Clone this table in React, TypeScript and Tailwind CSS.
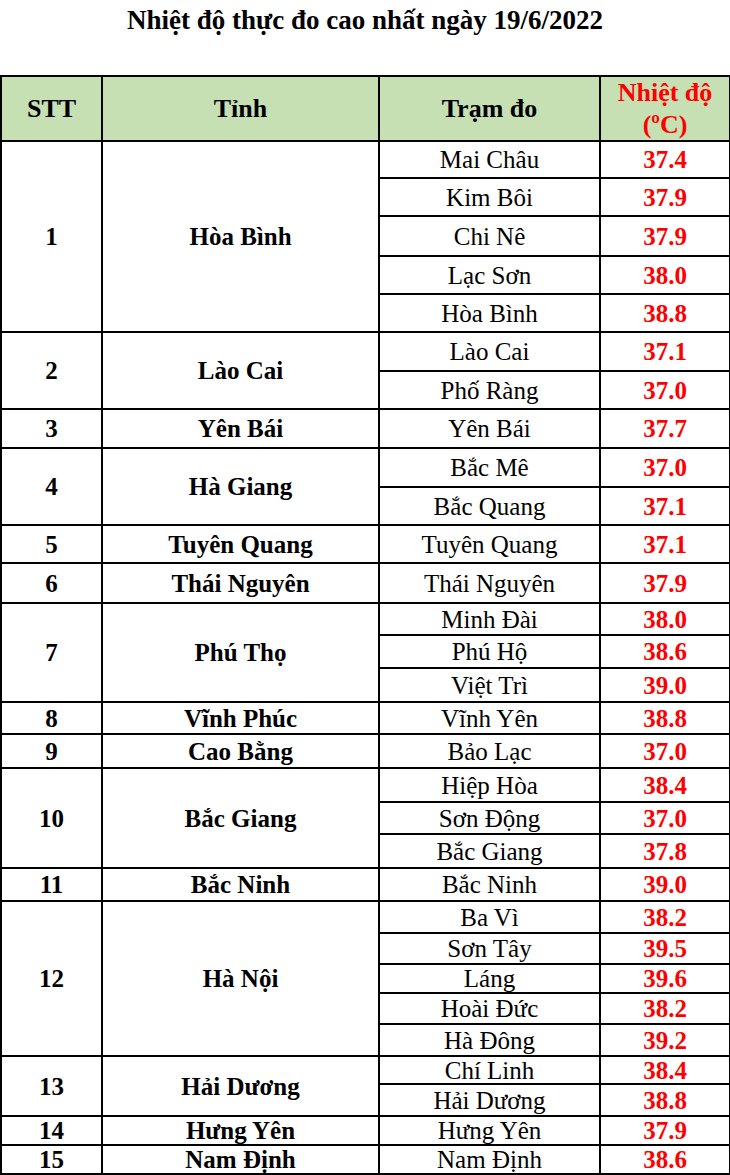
import React from 'react';

type Station = { name: string; temp: string; h: string };
type Province = { stt: number; tinh: string; rows: Station[] };

const DATA: Province[] = [
    {
        stt: 1,
        tinh: 'Hòa Bình',
        rows: [
            { name: 'Mai Châu', temp: '37.4', h: 'h-[37px]' },
            { name: 'Kim Bôi', temp: '37.9', h: 'h-[38px]' },
            { name: 'Chi Nê', temp: '37.9', h: 'h-[40px]' },
            { name: 'Lạc Sơn', temp: '38.0', h: 'h-[38px]' },
            { name: 'Hòa Bình', temp: '38.8', h: 'h-[38px]' },
        ],
    },
    {
        stt: 2,
        tinh: 'Lào Cai',
        rows: [
            { name: 'Lào Cai', temp: '37.1', h: 'h-[39px]' },
            { name: 'Phố Ràng', temp: '37.0', h: 'h-[38px]' },
        ],
    },
    { stt: 3, tinh: 'Yên Bái', rows: [{ name: 'Yên Bái', temp: '37.7', h: 'h-[39px]' }] },
    {
        stt: 4,
        tinh: 'Hà Giang',
        rows: [
            { name: 'Bắc Mê', temp: '37.0', h: 'h-[39px]' },
            { name: 'Bắc Quang', temp: '37.1', h: 'h-[38px]' },
        ],
    },
    { stt: 5, tinh: 'Tuyên Quang', rows: [{ name: 'Tuyên Quang', temp: '37.1', h: 'h-[38px]' }] },
    { stt: 6, tinh: 'Thái Nguyên', rows: [{ name: 'Thái Nguyên', temp: '37.9', h: 'h-[40px]' }] },
    {
        stt: 7,
        tinh: 'Phú Thọ',
        rows: [
            { name: 'Minh Đài', temp: '38.0', h: 'h-[32px]' },
            { name: 'Phú Hộ', temp: '38.6', h: 'h-[33px]' },
            { name: 'Việt Trì', temp: '39.0', h: 'h-[34px]' },
        ],
    },
    { stt: 8, tinh: 'Vĩnh Phúc', rows: [{ name: 'Vĩnh Yên', temp: '38.8', h: 'h-[32px]' }] },
    { stt: 9, tinh: 'Cao Bằng', rows: [{ name: 'Bảo Lạc', temp: '37.0', h: 'h-[34px]' }] },
    {
        stt: 10,
        tinh: 'Bắc Giang',
        rows: [
            { name: 'Hiệp Hòa', temp: '38.4', h: 'h-[34px]' },
            { name: 'Sơn Động', temp: '37.0', h: 'h-[32px]' },
            { name: 'Bắc Giang', temp: '37.8', h: 'h-[34px]' },
        ],
    },
    { stt: 11, tinh: 'Bắc Ninh', rows: [{ name: 'Bắc Ninh', temp: '39.0', h: 'h-[33px]' }] },
    {
        stt: 12,
        tinh: 'Hà Nội',
        rows: [
            { name: 'Ba Vì', temp: '38.2', h: 'h-[32px]' },
            { name: 'Sơn Tây', temp: '39.5', h: 'h-[31px]' },
            { name: 'Láng', temp: '39.6', h: 'h-[29px]' },
            { name: 'Hoài Đức', temp: '38.2', h: 'h-[31px]' },
            { name: 'Hà Đông', temp: '39.2', h: 'h-[32px]' },
        ],
    },
    {
        stt: 13,
        tinh: 'Hải Dương',
        rows: [
            { name: 'Chí Linh', temp: '38.4', h: 'h-[28px]' },
            { name: 'Hải Dương', temp: '38.8', h: 'h-[32px]' },
        ],
    },
    { stt: 14, tinh: 'Hưng Yên', rows: [{ name: 'Hưng Yên', temp: '37.9', h: 'h-[29px]' }] },
    { stt: 15, tinh: 'Nam Định', rows: [{ name: 'Nam Định', temp: '38.6', h: 'h-[29px]' }] },
];

const cell =
    'border-2 border-black p-0 text-center align-middle leading-none [font-family:Liberation_Serif,serif]';

export default function App() {
    return (
        <div className="w-[730px] bg-white text-black [font-family:Liberation_Serif,serif]">
            {/* Title */}
            <div className="h-[41px] flex items-center justify-center text-[27px] font-bold">
                Nhiệt độ thực đo cao nhất ngày 19/6/2022
            </div>

            <table className="mt-[34px] w-[729px] table-fixed border-collapse">
                <colgroup>
                    <col className="w-[101px]" />
                    <col className="w-[277px]" />
                    <col className="w-[221px]" />
                    <col className="w-[130px]" />
                </colgroup>
                <thead>
                    <tr className="h-[65px] bg-[#c6e0b4] text-[26px] font-bold">
                        <th className={cell}>STT</th>
                        <th className={cell}>Tỉnh</th>
                        <th className={cell}>Trạm đo</th>
                        <th className={`${cell} text-[#ff0000]`}>
                            <div className="flex flex-col items-center gap-[4px]">
                                <span className="leading-[28px]">Nhiệt độ</span>
                                <span className="leading-[28px]">(ºC)</span>
                            </div>
                        </th>
                    </tr>
                </thead>
                <tbody className="text-[25px]">
                    {DATA.map((p) =>
                        p.rows.map((r, i) => (
                            <tr key={`${p.stt}-${i}`} className={r.h}>
                                {i === 0 && (
                                    <>
                                        <td rowSpan={p.rows.length} className={`${cell} font-bold`}>
                                            {p.stt}
                                        </td>
                                        <td rowSpan={p.rows.length} className={`${cell} font-bold`}>
                                            {p.tinh}
                                        </td>
                                    </>
                                )}
                                <td className={cell}>{r.name}</td>
                                <td className={`${cell} font-bold text-[#ff0000]`}>{r.temp}</td>
                            </tr>
                        ))
                    )}
                </tbody>
            </table>
        </div>
    );
}
